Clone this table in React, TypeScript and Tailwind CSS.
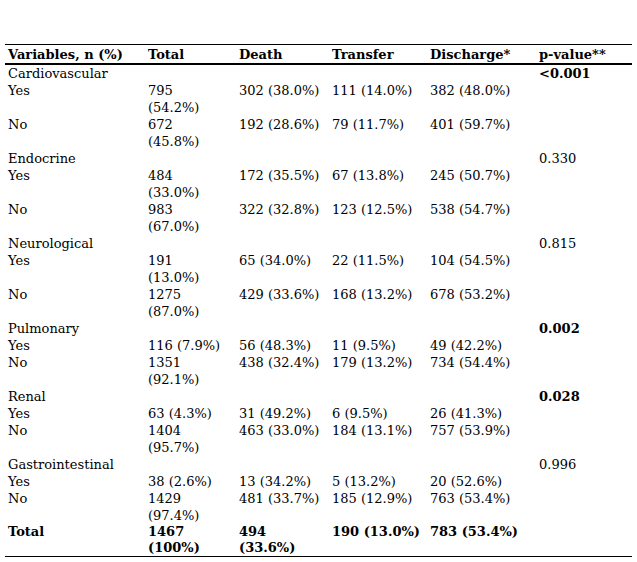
type Row = {
  label: string;
  total?: string;
  death?: string;
  transfer?: string;
  discharge?: string;
};

const groups: { name: string; p: string; pBold: boolean; rows: Row[] }[] = [
  {
    name: "Cardiovascular",
    p: "<0.001",
    pBold: true,
    rows: [
      { label: "Yes", total: "795 (54.2%)", death: "302 (38.0%)", transfer: "111 (14.0%)", discharge: "382 (48.0%)" },
      { label: "No", total: "672 (45.8%)", death: "192 (28.6%)", transfer: "79 (11.7%)", discharge: "401 (59.7%)" },
    ],
  },
  {
    name: "Endocrine",
    p: "0.330",
    pBold: false,
    rows: [
      { label: "Yes", total: "484 (33.0%)", death: "172 (35.5%)", transfer: "67 (13.8%)", discharge: "245 (50.7%)" },
      { label: "No", total: "983 (67.0%)", death: "322 (32.8%)", transfer: "123 (12.5%)", discharge: "538 (54.7%)" },
    ],
  },
  {
    name: "Neurological",
    p: "0.815",
    pBold: false,
    rows: [
      { label: "Yes", total: "191 (13.0%)", death: "65 (34.0%)", transfer: "22 (11.5%)", discharge: "104 (54.5%)" },
      { label: "No", total: "1275 (87.0%)", death: "429 (33.6%)", transfer: "168 (13.2%)", discharge: "678 (53.2%)" },
    ],
  },
  {
    name: "Pulmonary",
    p: "0.002",
    pBold: true,
    rows: [
      { label: "Yes", total: "116 (7.9%)", death: "56 (48.3%)", transfer: "11 (9.5%)", discharge: "49 (42.2%)" },
      { label: "No", total: "1351 (92.1%)", death: "438 (32.4%)", transfer: "179 (13.2%)", discharge: "734 (54.4%)" },
    ],
  },
  {
    name: "Renal",
    p: "0.028",
    pBold: true,
    rows: [
      { label: "Yes", total: "63 (4.3%)", death: "31 (49.2%)", transfer: "6 (9.5%)", discharge: "26 (41.3%)" },
      { label: "No", total: "1404 (95.7%)", death: "463 (33.0%)", transfer: "184 (13.1%)", discharge: "757 (53.9%)" },
    ],
  },
  {
    name: "Gastrointestinal",
    p: "0.996",
    pBold: false,
    rows: [
      { label: "Yes", total: "38 (2.6%)", death: "13 (34.2%)", transfer: "5 (13.2%)", discharge: "20 (52.6%)" },
      { label: "No", total: "1429 (97.4%)", death: "481 (33.7%)", transfer: "185 (12.9%)", discharge: "763 (53.4%)" },
    ],
  },
];

// Word-style cells: small left margin, the Total column wraps early
const cell = "pl-[3px] pr-1 align-top";
const totalCell = "pl-[3px] pr-[10px] align-top";

export default function App() {
  return (
    <div className="w-[637px] h-[562px] bg-white pt-[44px] pl-[5px] text-black font-['DejaVu_Serif',serif] text-[13px] leading-[17px]">
      <table className="w-[627px] table-fixed border-collapse">
        <colgroup>
          <col className="w-[140px]" />
          <col className="w-[91px]" />
          <col className="w-[93px]" />
          <col className="w-[98px]" />
          <col className="w-[109px]" />
          <col className="w-[96px]" />
        </colgroup>
        <thead>
          <tr className="border-t border-b-2 border-black text-left">
            <th className={`${cell} pt-[1px] font-bold`}>Variables, n (%)</th>
            <th className={`${totalCell} pt-[1px] font-bold`}>Total</th>
            <th className={`${cell} pt-[1px] font-bold`}>Death</th>
            <th className={`${cell} pt-[1px] font-bold`}>Transfer</th>
            <th className={`${cell} pt-[1px] font-bold`}>Discharge*</th>
            <th className={`${cell} pt-[1px] font-bold`}>p-value**</th>
          </tr>
        </thead>
        <tbody>
          {groups.map((g) => (
            <>
              <tr key={g.name}>
                <td className={cell}>{g.name}</td>
                <td className={totalCell}></td>
                <td className={cell}></td>
                <td className={cell}></td>
                <td className={cell}></td>
                <td className={`${cell} ${g.pBold ? "font-bold" : ""}`}>{g.p}</td>
              </tr>
              {g.rows.map((r) => (
                <tr key={g.name + r.label}>
                  <td className={cell}>{r.label}</td>
                  <td className={totalCell}>{r.total}</td>
                  <td className={cell}>{r.death}</td>
                  <td className={cell}>{r.transfer}</td>
                  <td className={cell}>{r.discharge}</td>
                  <td className={cell}></td>
                </tr>
              ))}
            </>
          ))}
          <tr className="border-b border-black font-bold leading-[16px]">
            <td className={cell}>Total</td>
            <td className={totalCell}>1467 (100%)</td>
            <td className={cell}>494 (33.6%)</td>
            <td className={cell}>190 (13.0%)</td>
            <td className={cell}>783 (53.4%)</td>
            <td className={cell}></td>
          </tr>
        </tbody>
      </table>
    </div>
  );
}
